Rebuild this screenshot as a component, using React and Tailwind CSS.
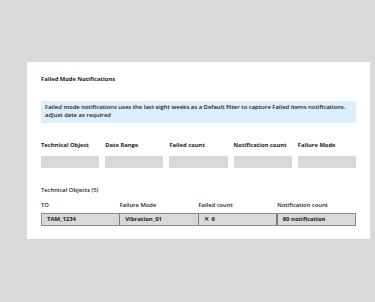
export default function App() {
  const filters = ["Technical Object", "Date Range", "Failed count", "Notification count", "Failure Mode"];
  return (
    <div className="w-[375px] h-[302px] bg-[#d9d9d9] pt-[62px] pl-[27px] pr-[5px] text-[#1a1a1a]" style={{ fontFamily: '"Open Sans", "Noto Sans", sans-serif' }}>
      <div className="bg-white h-[177px] px-[14px] pt-[12px]">
        <div className="text-[5.8px] font-bold leading-[10px] whitespace-nowrap">Failed Mode Notifications</div>
        <div className="mt-[17px] h-[22px] bg-[#dcedfc] px-[4px] pt-[3px] text-[5.9px] font-semibold leading-[7.5px] whitespace-nowrap">
          Failed mode notifications uses the last eight weeks as a Default filter to capture Failed items notifications.
          <br />
          adjust date as required
        </div>
        <div className="mt-[17px] grid grid-cols-5 gap-x-[6px]">
          {filters.map((f) => (
            <div key={f} className="text-[5.8px] font-bold leading-[10px] whitespace-nowrap">{f}</div>
          ))}
          {filters.map((f) => (
            <div key={f + "b"} className="mt-[6px] h-[12px] bg-[#d9d9d9]" />
          ))}
        </div>
        <div className="mt-[17px] text-[5.8px] font-semibold leading-[10px]">Technical Objects (5)</div>
        <div className="mt-[5px] grid grid-cols-4 text-[5.8px] font-semibold leading-[10px]">
          <div>TO</div>
          <div>Failure Mode</div>
          <div>Failed count</div>
          <div>Notification count</div>
        </div>
        <div className="mt-[3px] grid grid-cols-4 h-[13px] border border-[#8a8a8a] text-[5.9px] font-bold leading-[11px]">
          <div className="bg-[#d9d9d9] pl-[5px] border-r border-[#7a7a7a]">TAM_1234</div>
          <div className="bg-[#d9d9d9] pl-[5px] border-r border-[#7a7a7a]">Vibration_01</div>
          <div className="bg-[#d9d9d9] pl-[5px] border-r border-[#7a7a7a] flex items-center gap-[3px]">
            <span className="inline-flex items-center justify-center w-[5px] h-[5px] text-[5.5px] font-bold leading-none">✕</span>
            <span>6</span>
          </div>
          <div className="bg-[#d9d9d9] pl-[5px] border-l border-[#7a7a7a]">80 notification</div>
        </div>
      </div>
    </div>
  );
}
